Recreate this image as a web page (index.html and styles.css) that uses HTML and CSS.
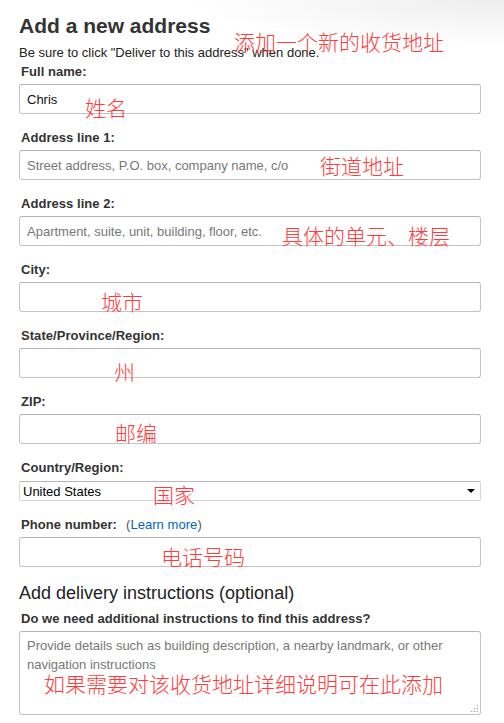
FILE: index.html
```html
<!DOCTYPE html>
<html lang="en">
<head>
<meta charset="utf-8">
<title>Add a new address</title>
<link rel="stylesheet" href="styles.css">
</head>
<body>
<div class="page">
  <h1 class="title">Add a new address</h1>
  <p class="hint">Be sure to click "Deliver to this address" when done.</p>

  <div class="field">
    <label class="label">Full name:</label>
    <input class="input" type="text" value="Chris">
  </div>
  <div class="field">
    <label class="label">Address line 1:</label>
    <input class="input" type="text" placeholder="Street address, P.O. box, company name, c/o">
  </div>
  <div class="field">
    <label class="label">Address line 2:</label>
    <input class="input" type="text" placeholder="Apartment, suite, unit, building, floor, etc.">
  </div>
  <div class="field">
    <label class="label">City:</label>
    <input class="input" type="text">
  </div>
  <div class="field">
    <label class="label">State/Province/Region:</label>
    <input class="input" type="text">
  </div>
  <div class="field">
    <label class="label">ZIP:</label>
    <input class="input" type="text">
  </div>
  <div class="field">
    <label class="label">Country/Region:</label>
    <div class="select-wrap">
      <select class="select"><option>United States</option></select>
    </div>
  </div>
  <div class="field">
    <div class="label">Phone number:<span class="learn">(<a class="link" href="#">Learn more</a>)</span></div>
    <input class="input" type="text">
  </div>

  <h2 class="subhead">Add delivery instructions (optional)</h2>
  <div class="field field-last">
    <label class="label">Do we need additional instructions to find this address?</label>
    <div class="ta-wrap">
      <textarea class="textarea" placeholder="Provide details such as building description, a nearby landmark, or other navigation instructions"></textarea>
      <span class="grip"></span>
    </div>
  </div>

  <span class="note n1">添加一个新的收货地址</span>
  <span class="note n2">姓名</span>
  <span class="note n3">街道地址</span>
  <span class="note n4">具体的单元、楼层</span>
  <span class="note n5">城市</span>
  <span class="note n6">州</span>
  <span class="note n7">邮编</span>
  <span class="note n8">国家</span>
  <span class="note n9">电话号码</span>
  <span class="note n10">如果需要对该收货地址详细说明可在此添加</span>
</div>
</body>
</html>
```

FILE: styles.css
```css
html, body {
  margin: 0;
  padding: 0;
  background: #fff;
}
body {
  font-family: "Liberation Sans", Arial, sans-serif;
  color: #333;
  background: radial-gradient(ellipse 320px 45px at 100% 0, #ededed, #fff) no-repeat;
}
.page {
  position: relative;
  padding: 14px 0 0 19px;
  width: 462px;
}
.title {
  margin: 0;
  font-size: 21px;
  line-height: 24px;
  font-weight: bold;
  color: #333;
}
.hint {
  margin: 7px 0 3px;
  font-size: 13px;
  line-height: 16px;
  color: #222;
}
.field {
  display: flex;
  flex-direction: column;
  margin-bottom: 16px;
}
.label {
  display: block;
  padding-left: 2px;
  margin-bottom: 4px;
  font-size: 13px;
  line-height: 16px;
  font-weight: bold;
  letter-spacing: 0.05px;
  color: #333;
}
.input {
  box-sizing: border-box;
  width: 462px;
  height: 30px;
  margin: 0;
  padding: 0 7px;
  border: 1px solid #c4c4c4;
  border-top-color: #b4b4b4;
  border-radius: 3px;
  font-family: "Liberation Sans", Arial, sans-serif;
  font-size: 13px;
  color: #111;
  background: #fff;
  outline: none;
}
.input::placeholder,
.textarea::placeholder {
  color: #777;
  opacity: 1;
}
.select-wrap {
  position: relative;
  margin-top: 1px;
  width: 462px;
}
.select {
  box-sizing: border-box;
  display: block;
  width: 462px;
  height: 20px;
  margin: 0;
  padding: 0 20px 0 3px;
  border: 1px solid #d6d6d6;
  border-top-color: #b8b8b8;
  border-radius: 2px;
  font-family: "Liberation Sans", Arial, sans-serif;
  font-size: 13px;
  color: #000;
  background: #fff;
  -webkit-appearance: none;
  appearance: none;
  outline: none;
}
.select-wrap::after {
  content: "";
  position: absolute;
  right: 6px;
  top: 8px;
  border-left: 4px solid transparent;
  border-right: 4px solid transparent;
  border-top: 4px solid #000;
}
.learn {
  margin-left: 9px;
  font-weight: normal;
  color: #555;
}
.link {
  color: #0066c0;
  text-decoration: none;
}
.subhead {
  margin: 14px 0 8px;
  font-size: 18px;
  line-height: 20px;
  font-weight: normal;
  color: #222;
}
.ta-wrap {
  position: relative;
  width: 462px;
}
.textarea {
  box-sizing: border-box;
  display: block;
  width: 462px;
  height: 84px;
  margin: 0;
  padding: 4px 7px;
  border: 1px solid #c4c4c4;
  border-top-color: #b4b4b4;
  border-radius: 3px;
  font-family: "Liberation Sans", Arial, sans-serif;
  font-size: 13px;
  line-height: 19px;
  color: #111;
  resize: none;
  outline: none;
}
.grip {
  position: absolute;
  right: 3px;
  bottom: 3px;
  width: 8px;
  height: 8px;
  background:
    radial-gradient(circle, #a8a8a8 0.8px, transparent 1.1px) 0 0 / 3px 3px;
  clip-path: polygon(100% 0, 100% 100%, 0 100%);
}
.note {
  position: absolute;
  font-family: "Noto Sans CJK SC", sans-serif;
  font-size: 21px;
  line-height: 21px;
  font-weight: 300;
  color: #ff3b3b;
  white-space: nowrap;
}
.n1 { left: 234px; top: 31px; }
.n2 { left: 85px; top: 97px; }
.n3 { left: 320px; top: 155px; }
.n4 { left: 282px; top: 225px; }
.n5 { left: 101px; top: 291px; }
.n6 { left: 114px; top: 361px; }
.n7 { left: 115px; top: 422px; }
.n8 { left: 153px; top: 484px; }
.n9 { left: 161px; top: 546px; }
.n10 { left: 44px; top: 673px; }
```
